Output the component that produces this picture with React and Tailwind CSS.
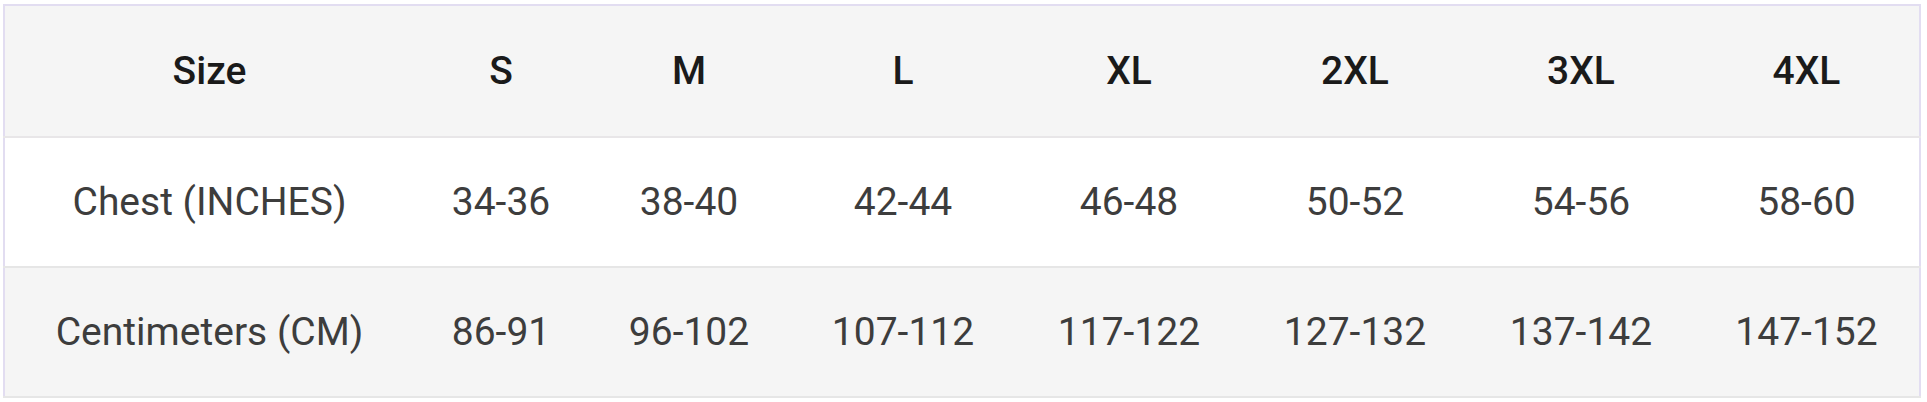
import React from "react";

// --- Size chart data ---
const sizes = ["S", "M", "L", "XL", "2XL", "3XL", "4XL"];

const rows = [
	{
		label: "Chest (INCHES)",
		values: ["34-36", "38-40", "42-44", "46-48", "50-52", "54-56", "58-60"],
		bg: "bg-white",
	},
	{
		label: "Centimeters (CM)",
		values: ["86-91", "96-102", "107-112", "117-122", "127-132", "137-142", "147-152"],
		bg: "bg-[#f5f5f5]",
	},
];

const App = () => {
	return (
		<div className="w-[1927px] h-[402px] bg-white pt-[4px] pl-[3px] font-['Roboto',sans-serif]">
			<table className="table-fixed w-[1918px] border-collapse border-2 border-[#e2ddf1]">
				<colgroup>
					<col className="w-[410px]" />
					<col className="w-[174px]" />
					<col className="w-[202px]" />
					<col className="w-[226px]" />
					<col className="w-[226px]" />
					<col className="w-[226px]" />
					<col className="w-[226px]" />
					<col className="w-[226px]" />
				</colgroup>
				<thead>
					<tr className="h-[132px] bg-[#f5f5f5] border-b-2 border-[#e8e6e8]">
						<th className="text-center text-[39px] font-medium text-[#1a1a1a]">Size</th>
						{sizes.map((s) => (
							<th key={s} className="text-center text-[39px] font-medium text-[#1a1a1a]">
								{s}
							</th>
						))}
					</tr>
				</thead>
				<tbody>
					{rows.map((row) => (
						<tr key={row.label} className={`h-[130px] border-b-2 border-[#e6e6e6] ${row.bg}`}>
							<td className="text-center text-[39px] font-normal text-[#3d3d3d]">{row.label}</td>
							{row.values.map((v, i) => (
								<td key={i} className="text-center text-[39px] font-normal text-[#3d3d3d]">
									{v}
								</td>
							))}
						</tr>
					))}
				</tbody>
			</table>
		</div>
	);
};

export default App;
